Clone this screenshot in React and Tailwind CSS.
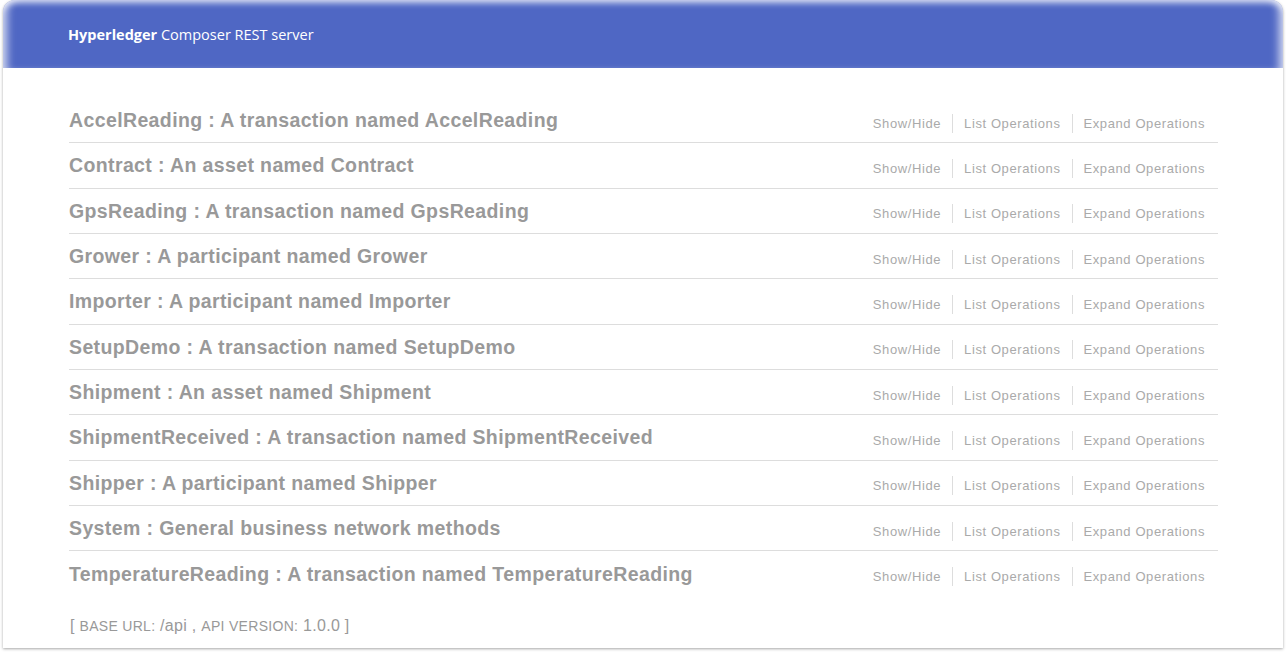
const resources = [
  ["AccelReading", "A transaction named AccelReading"],
  ["Contract", "An asset named Contract"],
  ["GpsReading", "A transaction named GpsReading"],
  ["Grower", "A participant named Grower"],
  ["Importer", "A participant named Importer"],
  ["SetupDemo", "A transaction named SetupDemo"],
  ["Shipment", "An asset named Shipment"],
  ["ShipmentReceived", "A transaction named ShipmentReceived"],
  ["Shipper", "A participant named Shipper"],
  ["System", "General business network methods"],
  ["TemperatureReading", "A transaction named TemperatureReading"],
];

function ResourceRow({ name, desc, last }) {
  return (
    <li
      className={
        "flex justify-between items-center h-[45.33px] " +
        (last ? "" : "border-b border-[#dddddd]")
      }
    >
      <h2 className="text-[19.5px] tracking-[0.38px] font-bold text-[#999999] leading-none mt-[1px]">
        {name} : {desc}
      </h2>
      <ul className="flex items-center text-[13px] tracking-[0.6px] text-[#aaaaaa] pt-[6px] pr-[13px]">
        <li className="pr-[11px] border-r border-[#dddddd] leading-[19px]">Show/Hide</li>
        <li className="px-[11px] border-r border-[#dddddd] leading-[19px]">List Operations</li>
        <li className="pl-[11px] leading-[19px]">Expand Operations</li>
      </ul>
    </li>
  );
}

export default function App() {
  return (
    <div className="w-[1286px] h-[653px] bg-white px-[3px] pb-[5px] overflow-hidden font-['Liberation_Sans',Arial,sans-serif]">
      <div className="h-full bg-white rounded-t-[12px] shadow-[0_1px_3px_rgba(0,0,0,0.35)] flex flex-col">
        <div className="h-[68px] shrink-0 bg-[#4f67c4] rounded-t-[12px] flex items-center pl-[65px] pt-[1px] shadow-[inset_10px_0_8px_-6px_rgba(255,255,255,0.75),inset_-10px_0_8px_-6px_rgba(255,255,255,0.75),inset_0_8px_6px_-5px_rgba(255,255,255,0.75)]">
          <span className="text-white text-[14.5px] font-['Open_Sans',sans-serif]">
            <b className="font-bold">Hyperledger</b> Composer REST server
          </span>
        </div>
        <div className="pl-[66px] pr-[65px] pt-[30px]">
          <ul>
            {resources.map(([name, desc], i) => (
              <ResourceRow key={name} name={name} desc={desc} last={i === resources.length - 1} />
            ))}
          </ul>
          <div className="mt-[18px] text-[#999999] text-[16px] tracking-[0.3px] leading-[22px] pl-[1px]">
            [ <span className="text-[14px] uppercase">Base url:</span> /api ,{" "}
            <span className="text-[14px] uppercase">Api version:</span> 1.0.0 ]
          </div>
        </div>
      </div>
    </div>
  );
}
